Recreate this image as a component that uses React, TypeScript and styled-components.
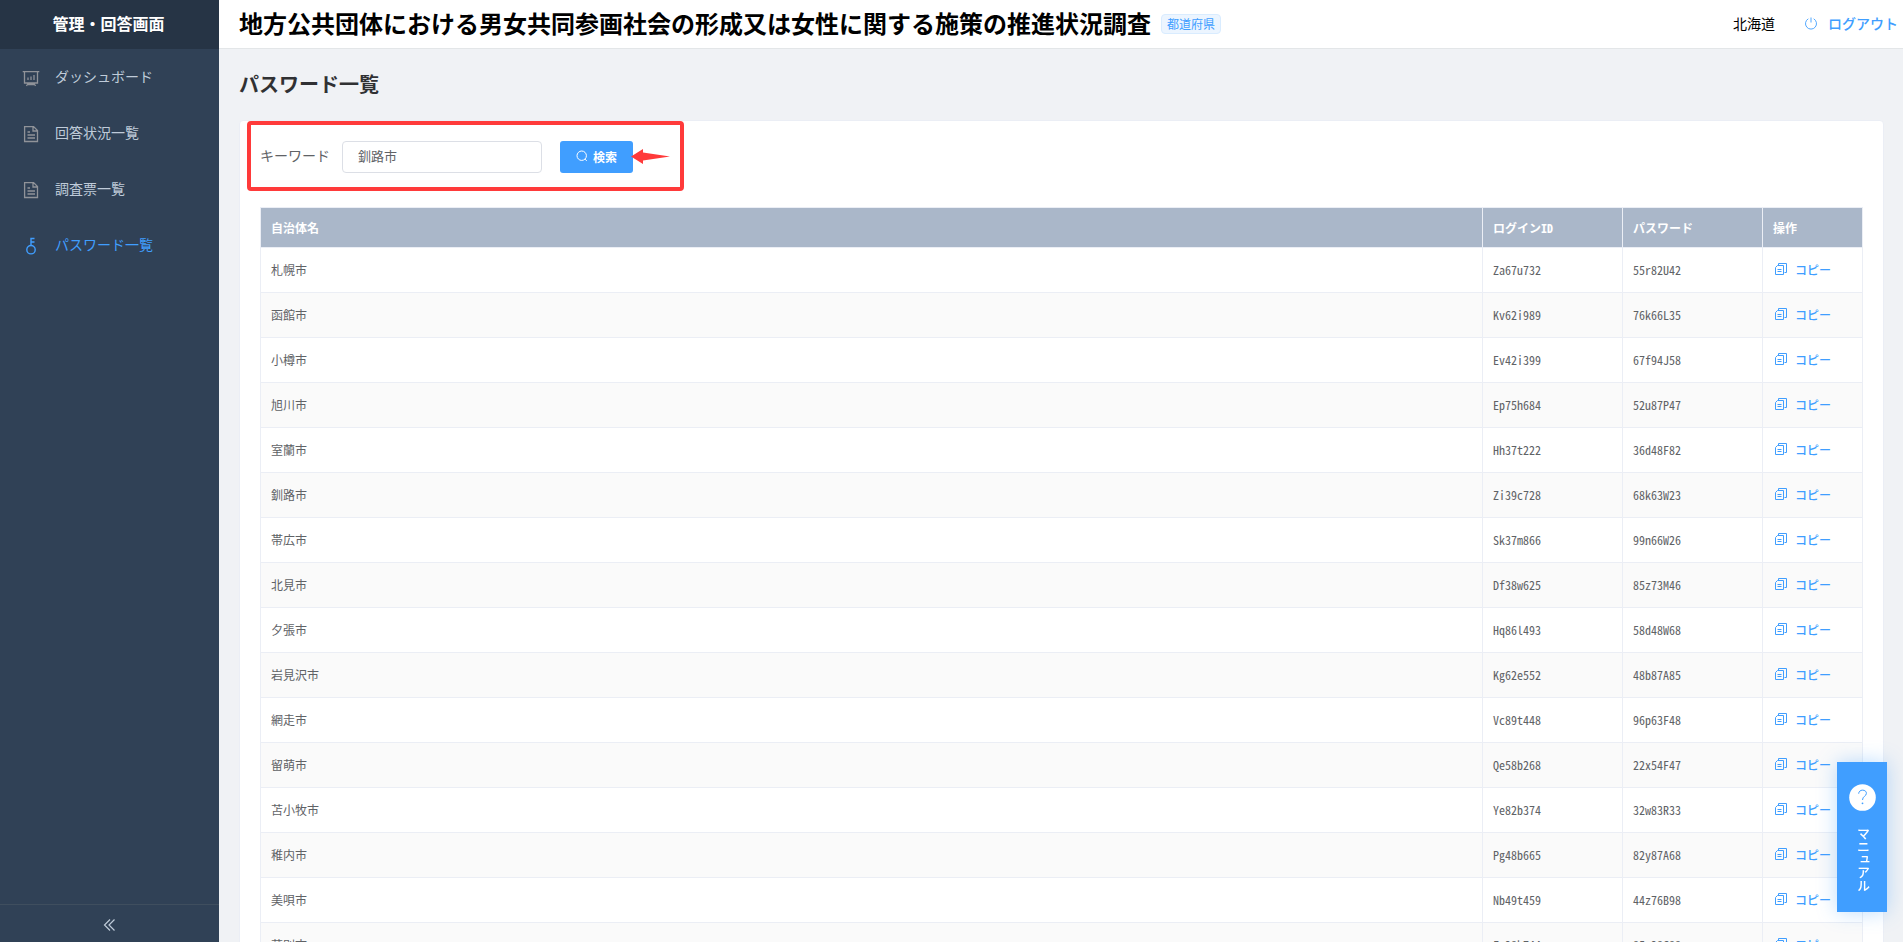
import React, { useState } from "react";
import styled, { createGlobalStyle, css } from "styled-components";

const sans = `"Noto Sans CJK JP", sans-serif`;
const mono = `"Noto Sans Mono CJK JP", "Noto Sans CJK JP", monospace`;

const GlobalStyle = createGlobalStyle`
  *, *::before, *::after { box-sizing: border-box; }
  html, body, #root { height: 100%; }
  body {
    margin: 0;
    overflow: hidden;
    font-family: ${sans};
    font-size: 14px;
    color: #606266;
    background: #f0f2f5;
  }
  button, input { font-family: inherit; }
`;

const Shell = styled.div`
  display: flex;
  height: 100vh;
`;

const Sidebar = styled.aside`
  display: flex;
  flex-direction: column;
  flex: 0 0 219px;
  background: #304156;
`;

const Brand = styled.div`
  height: 49px;
  padding-right: 2px;
  line-height: 46px;
  background: #263445;
  color: #fff;
  font-size: 16px;
  font-weight: 700;
  text-align: center;
`;

const Nav = styled.nav`
  flex: 1;
  padding-top: 1px;
`;

const NavLink = styled.a<{ $active?: boolean }>`
  display: flex;
  align-items: center;
  gap: 14px;
  height: 56px;
  padding-left: 21px;
  color: ${(p) => (p.$active ? "#409eff" : "#bfcbd9")};
  text-decoration: none;
  line-height: 20px;

  span {
    padding-bottom: 4px;
  }

  svg {
    width: 20px;
    height: 20px;
    color: ${(p) => (p.$active ? "#409eff" : "#909399")};
  }
`;

const Collapse = styled.button`
  display: flex;
  align-items: center;
  justify-content: center;
  height: 38px;
  padding: 2px 0 0;
  border: 0;
  border-top: 1px solid #3f4e5e;
  background: none;
  color: #bfcbd9;
`;

const Main = styled.div`
  display: flex;
  flex: 1;
  flex-direction: column;
  min-width: 0;
`;

const Header = styled.header`
  display: flex;
  align-items: center;
  flex: none;
  height: 49px;
  padding: 0 5px 0 20px;
  border-bottom: 1px solid #e3e6e8;
  background: #fff;
  color: #000;
`;

const SiteTitle = styled.h1`
  margin: 0;
  padding-bottom: 2px;
  font-size: 24px;
  line-height: 46px;
  font-weight: 700;
`;

const Tag = styled.span`
  margin-left: 10px;
  padding: 0 5px;
  border: 1px solid #d9ecff;
  border-radius: 4px;
  background: #ecf5ff;
  color: #409eff;
  font-size: 12px;
  line-height: 18px;
`;

const Account = styled.div`
  display: flex;
  align-items: center;
  gap: 29px;
  margin-left: auto;
  padding-bottom: 2px;
  line-height: 20px;
`;

const Logout = styled.a`
  display: flex;
  align-items: center;
  gap: 10px;
  color: #409eff;
  font-weight: 500;
  text-decoration: none;
`;

const Content = styled.main`
  flex: 1;
  min-height: 0;
  padding: 20px 19px 0 20px;
  overflow: hidden;
`;

const PageTitle = styled.h2`
  margin: 0 0 21px;
  color: #303133;
  font-size: 20px;
  font-weight: 700;
  line-height: 30px;
`;

const Card = styled.section`
  border: 1px solid #ebeef5;
  border-radius: 4px;
  padding: 20px;
  background: #fff;
`;

const SearchForm = styled.form`
  position: relative;
  display: flex;
  align-items: center;
  height: 32px;
  margin-bottom: 34px;
`;

const Label = styled.label`
  width: 82px;
  padding-bottom: 4px;
`;

const TextInput = styled.input`
  width: 200px;
  height: 32px;
  margin-right: 18px;
  padding: 0 15px 3px;
  border: 1px solid #dcdfe6;
  border-radius: 4px;
  color: #606266;
  font-size: 13px;
  outline: none;
`;

const SearchButton = styled.button`
  display: flex;
  align-items: center;
  justify-content: center;
  gap: 5px;
  width: 73px;
  height: 32px;
  padding: 0 0 2px;
  border: 0;
  border-radius: 3px;
  background: #409eff;
  color: #fff;
  font-size: 12px;
  font-weight: 700;
`;

const Highlight = styled.div`
  position: absolute;
  top: -20px;
  left: -13px;
  width: 437px;
  height: 70px;
  border: 4px solid #ff3a3a;
  border-radius: 4px;
  pointer-events: none;
`;

const Pointer = styled.svg`
  position: absolute;
  left: 371px;
  top: 8px;
  width: 39px;
  height: 16px;
  pointer-events: none;
`;

const Table = styled.table`
  width: 100%;
  border-collapse: collapse;
  table-layout: fixed;
  font-family: ${mono};
  font-size: 12px;
  line-height: 20px;
`;

const cell = css`
  padding: 0 10px;
  border: 1px solid #ebeef5;
  text-align: left;
`;

const HeadCell = styled.th`
  ${cell}
  height: 40px;
  background: #aab7c9;
  color: #fff;
  font-weight: 700;
`;

const Row = styled.tr`
  &:nth-child(even) { background: #fafafa; }
`;

const Cell = styled.td`
  ${cell}
  height: 45px;
`;

const CopyButton = styled.button`
  display: flex;
  align-items: center;
  gap: 8px;
  height: 20px;
  padding: 0 2px 2px;
  border: 0;
  background: none;
  color: #409eff;
  font-family: ${sans};
  font-size: 12px;
  font-weight: 500;
`;

const Manual = styled.button`
  position: fixed;
  right: 16px;
  bottom: 30px;
  display: flex;
  flex-direction: column;
  align-items: center;
  gap: 16px;
  width: 50px;
  height: 150px;
  padding: 22px 0 0;
  border: 0;
  background: #409eff;
  box-shadow: 0 0 20px rgba(64, 158, 255, 0.35);
  color: #fff;
  font-size: 13px;
  font-weight: 500;
  line-height: 20px;
`;

const Vertical = styled.span`
  padding-left: 2px;
  writing-mode: vertical-rl;
`;

const stroke = { fill: "none", stroke: "currentColor" } as const;

const BoardIcon = () => (
  <svg viewBox="0 0 20 20" {...stroke} strokeWidth="1.3">
    <path d="M1.700 3.600h16.600M3.500 3.600v11.400h13V3.600M7.300 15l-1.800 3M12.700 15l1.800 3M7 16.500h6" />
    <path d="M7 9.500v2.500M10 8.500v3.500M13 7v5" />
  </svg>
);

const DocIcon = () => (
  <svg viewBox="0 0 20 20" {...stroke} strokeWidth="1.3">
    <path d="M3.600 2.600h9L16.500 6.500V17.500H3.600zM12 2.600V7h4.500M6.500 8h2.500M6.500 11h7.500M6.500 14h7.500" />
  </svg>
);

const KeyIcon = () => (
  <svg viewBox="0 0 20 20" {...stroke} strokeWidth="1.4">
    <circle cx="10" cy="13.700" r="4.200" />
    <path d="M10 9.500V2.500h3.500M10 6h3.500" />
  </svg>
);

const CollapseIcon = () => (
  <svg width="14" height="14" viewBox="0 0 14 14" {...stroke} strokeWidth="1.2">
    <path d="M7 1.500L1.500 7 7 12.500M11.500 1.500L6 7l5.500 5.500" />
  </svg>
);

const PowerIcon = () => (
  <svg width="14" height="14" viewBox="0 0 14 14" {...stroke} strokeWidth="0.9">
    <path d="M4.300 2.800a5.500 5.500 0 1 0 5.400 0M7 1.500v5" />
  </svg>
);

const SearchIcon = () => (
  <svg width="12" height="12" viewBox="0 0 12 12" {...stroke} strokeWidth="1">
    <circle cx="5.700" cy="5.700" r="4.700" />
    <path d="M9 9.200l1.800 1.600" />
  </svg>
);

const CopyIcon = () => (
  <svg width="12" height="12" viewBox="0 0 12 12" {...stroke} strokeWidth="1">
    <path d="M3.500 2.500V.5h8v9h-2M.5 4.500l2-2h6v9h-8zM2.500 6.500h4M2.500 8.500h4" />
  </svg>
);

const HelpIcon = () => (
  <svg width="27" height="27" viewBox="0 0 27 27" fill="none" stroke="#409eff">
    <circle cx="13.500" cy="13.500" r="13.300" fill="#fff" stroke="none" />
    <path d="M9.700 9.700c0-4.700 7.700-4.700 7.700-.4 0 3-3.900 2.900-3.900 6.700" strokeWidth="1" />
    <circle cx="13.500" cy="19.300" r=".9" fill="#409eff" stroke="none" />
  </svg>
);

const navItems = [
  { label: "ダッシュボード", Icon: BoardIcon },
  { label: "回答状況一覧", Icon: DocIcon },
  { label: "調査票一覧", Icon: DocIcon },
  { label: "パスワード一覧", Icon: KeyIcon, active: true },
];

const rows = [
  ["札幌市", "Za67u732", "55r82U42"],
  ["函館市", "Kv62i989", "76k66L35"],
  ["小樽市", "Ev42i399", "67f94J58"],
  ["旭川市", "Ep75h684", "52u87P47"],
  ["室蘭市", "Hh37t222", "36d48F82"],
  ["釧路市", "Zi39c728", "68k63W23"],
  ["帯広市", "Sk37m866", "99n66W26"],
  ["北見市", "Df38w625", "85z73M46"],
  ["夕張市", "Hq86l493", "58d48W68"],
  ["岩見沢市", "Kg62e552", "48b87A85"],
  ["網走市", "Vc89t448", "96p63F48"],
  ["留萌市", "Qe58b268", "22x54F47"],
  ["苫小牧市", "Ye82b374", "32w83R33"],
  ["稚内市", "Pg48b665", "82y87A68"],
  ["美唄市", "Nb49t459", "44z76B98"],
  ["芦別市", "Fs28k744", "85x28C88"],
];

export default function App() {
  const [keyword, setKeyword] = useState("釧路市");
  return (
    <>
      <GlobalStyle />
      <Shell>
        <Sidebar>
          <Brand>管理・回答画面</Brand>
          <Nav>
            {navItems.map(({ label, Icon, active }) => (
              <NavLink key={label} href="#" $active={active}>
                <Icon />
                <span>{label}</span>
              </NavLink>
            ))}
          </Nav>
          <Collapse type="button" aria-label="メニューを閉じる">
            <CollapseIcon />
          </Collapse>
        </Sidebar>
        <Main>
          <Header>
            <SiteTitle>地方公共団体における男女共同参画社会の形成又は女性に関する施策の推進状況調査</SiteTitle>
            <Tag>都道府県</Tag>
            <Account>
              <span>北海道</span>
              <Logout href="#">
                <PowerIcon />
                ログアウト
              </Logout>
            </Account>
          </Header>
          <Content>
            <PageTitle>パスワード一覧</PageTitle>
            <Card>
              <SearchForm onSubmit={(e) => e.preventDefault()}>
                <Label htmlFor="keyword">キーワード</Label>
                <TextInput id="keyword" value={keyword} onChange={(e) => setKeyword(e.target.value)} />
                <SearchButton type="submit">
                  <SearchIcon />
                  検索
                </SearchButton>
                <Highlight />
                <Pointer viewBox="0 0 39 16" fill="#ff3a3a">
                  <path d="M0 7.500L12 0v3.500L39 7.500 12 11.500V15z" />
                </Pointer>
              </SearchForm>
              <Table>
                <colgroup>
                  <col />
                  <col width="140" />
                  <col width="140" />
                  <col width="100" />
                </colgroup>
                <thead>
                  <tr>
                    <HeadCell>自治体名</HeadCell>
                    <HeadCell>ログインID</HeadCell>
                    <HeadCell>パスワード</HeadCell>
                    <HeadCell>操作</HeadCell>
                  </tr>
                </thead>
                <tbody>
                  {rows.map(([name, id, password]) => (
                    <Row key={id}>
                      <Cell>{name}</Cell>
                      <Cell>{id}</Cell>
                      <Cell>{password}</Cell>
                      <Cell>
                        <CopyButton type="button">
                          <CopyIcon />
                          コピー
                        </CopyButton>
                      </Cell>
                    </Row>
                  ))}
                </tbody>
              </Table>
            </Card>
          </Content>
        </Main>
      </Shell>
      <Manual type="button">
        <HelpIcon />
        <Vertical>マニュアル</Vertical>
      </Manual>
    </>
  );
}
